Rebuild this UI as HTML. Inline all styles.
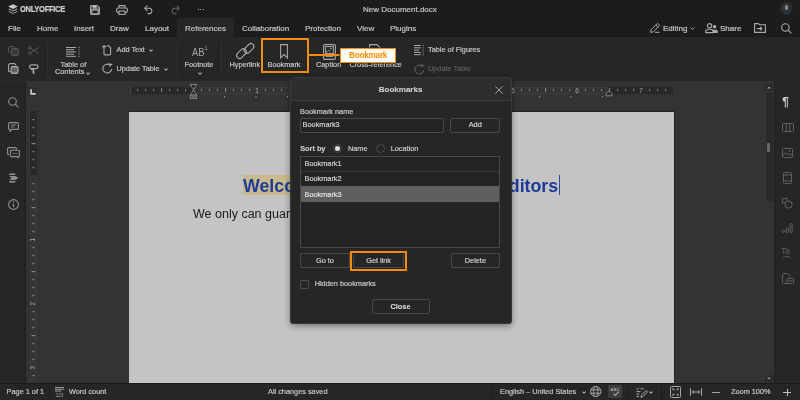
<!DOCTYPE html>
<html><head><meta charset="utf-8">
<style>
*{margin:0;padding:0;box-sizing:border-box}
html,body{width:800px;height:400px;overflow:hidden;background:#1c1c1c;font-family:"Liberation Sans",sans-serif;color:#c4c4c4}
.a{position:absolute}
.t8{position:absolute;font-size:8px;line-height:9px;white-space:nowrap;-webkit-text-stroke:0.2px currentColor}
.t7{position:absolute;font-size:7.33px;line-height:8px;white-space:nowrap;-webkit-text-stroke:0.2px currentColor}
svg{position:absolute;overflow:visible}
</style></head><body><div id="root" style="position:absolute;left:0;top:0;width:800px;height:400px;overflow:hidden;background:#1c1c1c;will-change:transform">
<!-- header -->
<div class="a" style="left:0;top:0;width:800px;height:37px;background:#1c1c1c"></div>
<!-- active tab -->
<div class="a" style="left:177px;top:18px;width:57px;height:20px;background:#262626"></div>
<!-- toolbar -->
<div class="a" style="left:0;top:37px;width:800px;height:44px;background:#262626"></div>
<!-- canvas -->
<div class="a" style="left:26px;top:81px;width:748px;height:302px;background:#333"></div>
<!-- left panel -->
<div class="a" style="left:0;top:80.5px;width:26px;height:302.5px;background:#262626;border-right:1px solid #1e1e1e;border-top:1px solid #2e2e2e"></div>
<!-- right panel -->
<div class="a" style="left:774px;top:81px;width:26px;height:302px;background:#262626;border-left:1px solid #1e1e1e"></div>
<!-- status -->
<div class="a" style="left:0;top:383px;width:800px;height:17px;background:#262626;border-top:1px solid #1a1a1a"></div>


<!-- logo -->
<svg style="left:8px;top:4px" width="10" height="10" viewBox="0 0 10 10">
<path d="M5 0.3 L9.8 2.6 L5 4.9 L0.2 2.6Z" fill="#c8c8c8"/>
<path d="M1.3 4.6 L5 6.4 L8.7 4.6 L9.8 5.2 L5 7.5 L0.2 5.2Z" fill="#a8a8a8"/>
<path d="M1.3 7.1 L5 8.9 L8.7 7.1 L9.8 7.7 L5 10 L0.2 7.7Z" fill="#909090"/>
</svg>
<div class="t8" style="left:20.3px;top:5.1px;font-weight:bold;font-size:8.6px;line-height:9px;letter-spacing:-0.35px;color:#d0d0d0;transform:scaleX(0.88);transform-origin:0 0">ONLYOFFICE</div>
<!-- save -->
<svg style="left:89.5px;top:4.5px" width="10" height="10" viewBox="0 0 10 10">
<path d="M1.2 0.5H7.6L9.5 2.4V8.8A0.7 0.7 0 0 1 8.8 9.5H1.2A0.7 0.7 0 0 1 0.5 8.8V1.2A0.7 0.7 0 0 1 1.2 0.5Z" fill="#8a8a8a" stroke="#a9a9a9" stroke-width="1"/>
<rect x="1.6" y="1.4" width="0.9" height="2.6" fill="#1c1c1c"/><rect x="7.3" y="1.4" width="0.9" height="2.6" fill="#1c1c1c"/>
<rect x="2.6" y="1" width="3.4" height="1.3" fill="#c8c8c8"/>
<rect x="2.6" y="5.8" width="4.8" height="2.2" fill="#1c1c1c"/>
</svg>
<!-- print -->
<svg style="left:115.5px;top:4.5px" width="12" height="10" viewBox="0 0 12 10" fill="none" stroke="#a9a9a9" stroke-width="1.1">
<path d="M3 3V0.6H9V3"/><rect x="0.6" y="3" width="10.8" height="4.6" rx="1.6"/><rect x="3" y="6" width="6" height="3.4" fill="#1c1c1c"/>
</svg>
<!-- undo -->
<svg style="left:143.5px;top:4.5px" width="10" height="9" viewBox="0 0 10 9" fill="none" stroke="#a9a9a9" stroke-width="1.1">
<path d="M3.4 0.6L0.8 3.2L3.4 5.8"/><path d="M0.8 3.2H6.2A3 3 0 0 1 6.2 8.6H3.6"/>
</svg>
<!-- redo -->
<svg style="left:169.5px;top:4.5px" width="10" height="9" viewBox="0 0 10 9" fill="none" stroke="#5e5e5e" stroke-width="1.1">
<path d="M6.6 0.6L9.2 3.2L6.6 5.8"/><path d="M9.2 3.2H3.8A3 3 0 0 0 3.8 8.6H6.4"/>
</svg>
<div class="a" style="left:197.5px;top:8.5px;width:1.3px;height:1.3px;background:#aaa"></div>
<div class="a" style="left:200px;top:8.5px;width:1.3px;height:1.3px;background:#aaa"></div>
<div class="a" style="left:202.5px;top:8.5px;width:1.3px;height:1.3px;background:#aaa"></div>
<!-- title -->
<div class="t8" style="left:363px;top:4.7px;color:#c4c4c4">New Document.docx</div>
<!-- avatar -->
<div class="a" style="left:780px;top:2px;width:13px;height:13px;border-radius:50%;background:radial-gradient(circle at 50% 45%,#3a3a3a 0,#2a2a2a 60%,#1c1c1c 100%)"></div>
<div class="a" style="left:785px;top:5px;width:3px;height:5px;border-radius:2px;background:#888"></div>
<div class="a" style="left:783px;top:11px;width:7px;height:3px;border-radius:3px 3px 0 0;background:#1e3a50"></div>
<!-- tabs -->
<div class="t8" style="left:8px;top:23.6px">File</div>
<div class="t8" style="left:37px;top:23.6px">Home</div>
<div class="t8" style="left:74px;top:23.6px">Insert</div>
<div class="t8" style="left:110px;top:23.6px">Draw</div>
<div class="t8" style="left:145px;top:23.6px">Layout</div>
<div class="t8" style="left:185px;top:23.6px">References</div>
<div class="t8" style="left:242px;top:23.6px">Collaboration</div>
<div class="t8" style="left:305px;top:23.6px">Protection</div>
<div class="t8" style="left:357px;top:23.6px">View</div>
<div class="t8" style="left:390px;top:23.6px">Plugins</div>
<!-- right header -->
<svg style="left:650px;top:23px" width="10" height="10" viewBox="0 0 10 10" fill="none" stroke="#a9a9a9" stroke-width="1">
<path d="M0.7 9.3L1 6.8L6.8 1A1.2 1.2 0 0 1 8.5 1L9 1.5A1.2 1.2 0 0 1 9 3.2L3.2 9Z"/><path d="M5.8 2L8 4.2"/><path d="M5 9.3H9.5"/>
</svg>
<div class="t8" style="left:663px;top:23.6px">Editing</div>
<svg style="left:690px;top:27px" width="5" height="3" viewBox="0 0 5 3" fill="none" stroke="#a9a9a9" stroke-width="0.9"><path d="M0.5 0.5L2.5 2.5L4.5 0.5"/></svg>
<svg style="left:705px;top:22.5px" width="14" height="11" viewBox="0 0 14 11" fill="none" stroke="#a9a9a9" stroke-width="1.1">
<circle cx="4.6" cy="2.7" r="2.1"/><path d="M0.8 9.6V8.4C0.8 7 2 6.2 3.4 6.2H5.8C7.2 6.2 8.4 7 8.4 8.4V9.6Z"/>
<circle cx="9.6" cy="3.8" r="1.8" fill="#a9a9a9" stroke="none"/><path d="M7.4 10.1V7.9C7.4 7.2 8 6.8 8.6 6.8H10.8C11.8 6.8 12.8 7.4 12.8 8.6V10.1Z" fill="#a9a9a9" stroke="none"/>
</svg>
<div class="t8" style="left:720px;top:23.6px">Share</div>
<svg style="left:754px;top:23px" width="12" height="10" viewBox="0 0 12 10" fill="none" stroke="#a9a9a9" stroke-width="1.1">
<path d="M0.6 9.4V0.6H4.4L5.6 1.8H11.4V9.4Z"/><path d="M3.2 5.6H8M6.2 3.8L8 5.6L6.2 7.4"/>
</svg>
<svg style="left:781px;top:22.5px" width="11" height="11" viewBox="0 0 11 11" fill="none" stroke="#a9a9a9" stroke-width="1.1">
<circle cx="4.4" cy="4.4" r="3.7"/><path d="M7 7L10.4 10.4"/>
</svg>


<!-- ===== toolbar ===== -->
<!-- copy (disabled) -->
<svg style="left:8px;top:46px" width="11" height="10" viewBox="0 0 11 10" fill="none" stroke="#5a5a5a" stroke-width="1">
<path d="M2.5 6.5H1.8A1.2 1.2 0 0 1 0.6 5.3V1.8A1.2 1.2 0 0 1 1.8 0.6H5.3A1.2 1.2 0 0 1 6.5 1.8V2.5"/>
<rect x="3.5" y="2.6" width="6.8" height="6.8" rx="1.4" fill="#3e3e3e"/><path d="M5.5 4.4V7.6M8.3 4.4V7.6" stroke="#2e2e2e" stroke-width="0.7"/>
</svg>
<!-- cut (disabled) -->
<svg style="left:28px;top:46px" width="11" height="9" viewBox="0 0 11 9" fill="none" stroke="#5a5a5a" stroke-width="1">
<circle cx="1.8" cy="1.8" r="1.3"/><circle cx="1.8" cy="7.2" r="1.3"/><path d="M3 2.5L10.6 7.6M3 6.5L10.6 1.4"/>
</svg>
<!-- paste -->
<svg style="left:8px;top:63px" width="11" height="11" viewBox="0 0 11 11" fill="none" stroke="#a6a6a6" stroke-width="1.1">
<path d="M2.6 8.6H1.8A1.2 1.2 0 0 1 0.6 7.4V2.4A1.8 1.8 0 0 1 2.4 0.6H6A1.8 1.8 0 0 1 7.8 2.4"/>
<rect x="3.2" y="3.6" width="6.8" height="6.8" rx="1.4" fill="#6e6e6e" stroke-width="1.2"/><path d="M5.2 5.4V8.6M8 5.4V8.6" stroke="#3a3a3a" stroke-width="0.7"/>
</svg>
<!-- format painter -->
<svg style="left:29px;top:63.5px" width="10" height="10" viewBox="0 0 10 10" fill="none" stroke="#a6a6a6" stroke-width="1.1">
<rect x="0.6" y="0.8" width="8.4" height="3.8" rx="1.9" stroke-width="1.2"/><path d="M2.6 4.2V5.6H4.5V6.6" stroke-width="1.1"/><path d="M4.5 6.4V9.8" stroke-width="1.9"/>
</svg>
<div class="a" style="left:47px;top:42px;width:1px;height:35px;background:#303030"></div>
<!-- TOC -->
<svg style="left:66px;top:47px" width="15" height="10" viewBox="0 0 15 10" fill="#a6a6a6">
<rect x="0" y="0" width="10" height="1"/><rect x="0" y="2.2" width="8" height="1"/><rect x="0" y="4.4" width="10" height="1"/><rect x="0" y="6.6" width="8" height="1"/><rect x="0" y="8.8" width="10" height="1"/>
<rect x="12.5" y="0" width="1" height="1"/><rect x="12.5" y="2.2" width="1" height="1"/><rect x="12.5" y="4.4" width="1" height="1"/><rect x="12.5" y="6.6" width="1" height="1"/><rect x="12.5" y="8.8" width="1" height="1"/>
</svg>
<div class="t7" style="left:60.5px;top:60.9px">Table of</div>
<div class="t7" style="left:55px;top:68.4px">Contents</div>
<svg style="left:86px;top:71.5px" width="4" height="3" viewBox="0 0 4 3" fill="none" stroke="#a6a6a6" stroke-width="1.05"><path d="M0.4 0.6L2 2.2L3.6 0.6"/></svg>
<!-- Add text -->
<svg style="left:102px;top:45px" width="10" height="11" viewBox="0 0 10 11" fill="none" stroke="#a6a6a6" stroke-width="1.1">
<path d="M4.6 0.9H6.8L8.6 2.7V9A0.9 0.9 0 0 1 7.7 9.9H2.9A0.9 0.9 0 0 1 2 9V3.6"/><path d="M0.2 1.6H4M2 0V3.4" stroke-width="1.1"/>
</svg>
<div class="t7" style="left:116.5px;top:46.4px">Add Text</div>
<svg style="left:149px;top:49px" width="4" height="3" viewBox="0 0 4 3" fill="none" stroke="#a6a6a6" stroke-width="1.05"><path d="M0.4 0.6L2 2.2L3.6 0.6"/></svg>
<!-- update table -->
<svg style="left:102px;top:63px;color:#a6a6a6" width="11" height="11" viewBox="0 0 11 11" fill="none" stroke="#a6a6a6" stroke-width="1.1">
<path d="M7.2 1.6A4.4 4.4 0 1 0 9.6 6.2"/><path d="M6.6 -0.1L10.6 1.2L7.6 4Z" stroke="none" fill="currentColor"/>
</svg>
<div class="t7" style="left:116.5px;top:65.2px">Update Table</div>
<svg style="left:164px;top:68px" width="4" height="3" viewBox="0 0 4 3" fill="none" stroke="#a6a6a6" stroke-width="1.05"><path d="M0.4 0.6L2 2.2L3.6 0.6"/></svg>
<div class="a" style="left:177px;top:42px;width:1px;height:35px;background:#303030"></div>
<!-- footnote -->
<div class="a" style="left:191.5px;top:45.9px;font-size:11px;line-height:12px;color:#a6a6a6;transform:scaleX(0.84);transform-origin:0 0;white-space:nowrap">AB</div>
<div class="a" style="left:204.6px;top:45.6px;font-size:5.5px;line-height:5px;color:#a6a6a6">1</div>
<div class="t7" style="left:184.5px;top:60.9px">Footnote</div>
<svg style="left:198px;top:72px" width="4" height="3" viewBox="0 0 4 3" fill="none" stroke="#a6a6a6" stroke-width="1.05"><path d="M0.4 0.6L2 2.2L3.6 0.6"/></svg>
<div class="a" style="left:221px;top:42px;width:1px;height:35px;background:#303030"></div>
<!-- hyperlink -->
<svg style="left:237px;top:43px" width="16" height="16" viewBox="0 0 16 16" fill="none" stroke="#a6a6a6" stroke-width="1.15">
<rect x="6.4" y="2.5" width="11.2" height="5.8" rx="2.9" transform="rotate(-45 12 5.4)"/>
<rect x="-1.1" y="7.7" width="11.2" height="5.8" rx="2.9" transform="rotate(-45 4.5 10.6)"/>
</svg>
<div class="t7" style="left:229.5px;top:60.9px">Hyperlink</div>
<!-- bookmark -->
<svg style="left:279.5px;top:44px" width="8" height="15" viewBox="0 0 8 15" fill="none" stroke="#a6a6a6" stroke-width="1.1">
<path d="M0.6 0.6H7.4V14L4 10.6L0.6 14Z"/>
</svg>
<div class="t7" style="left:267.5px;top:60.9px">Bookmark</div>
<!-- caption -->
<svg style="left:322.5px;top:43.5px" width="13" height="16" viewBox="0 0 13 16" fill="none" stroke="#a6a6a6" stroke-width="1.1">
<rect x="0.6" y="0.6" width="11.8" height="14.8" rx="1.2"/><rect x="2.6" y="2.6" width="7.8" height="7" stroke-width="1"/>
<path d="M3 8.6L5.6 6.2L7.4 7.8" stroke-width="0.9"/><circle cx="8" cy="4.6" r="0.8" fill="#a6a6a6" stroke="none"/><path d="M2.6 12.4H10.4" stroke-width="1"/>
</svg>
<div class="t7" style="left:316px;top:60.9px">Caption</div>
<!-- cross ref -->
<svg style="left:369px;top:44px" width="12" height="14" viewBox="0 0 12 14" fill="none" stroke="#a6a6a6" stroke-width="1.1">
<path d="M0.6 0.6H8L11.4 4V13.4H0.6Z"/>
</svg>
<div class="t7" style="left:349.4px;top:60.9px">Cross-reference</div>
<!-- table of figures -->
<svg style="left:413.5px;top:44.5px" width="11" height="11" viewBox="0 0 11 11" fill="#a6a6a6">
<rect x="0" y="0" width="6.5" height="1"/><rect x="0" y="2.3" width="7" height="1"/><rect x="0" y="4.6" width="5" height="1"/><rect x="0" y="6.9" width="7" height="1"/><rect x="0" y="9.2" width="6.5" height="1"/>
<rect x="8.6" y="0" width="1" height="1"/><rect x="8.6" y="2.3" width="1" height="1"/><rect x="8.6" y="4.6" width="1" height="1"/><rect x="8.6" y="6.9" width="1" height="1"/><rect x="8.6" y="9.2" width="1" height="1"/>
</svg>
<div class="t7" style="left:428px;top:46.4px">Table of Figures</div>
<svg style="left:413.5px;top:63.5px;color:#5a5a5a" width="11" height="11" viewBox="0 0 11 11" fill="none" stroke="#5a5a5a" stroke-width="1.1">
<path d="M7.2 1.6A4.4 4.4 0 1 0 9.6 6.2"/><path d="M6.6 -0.1L10.6 1.2L7.6 4Z" stroke="none" fill="currentColor"/>
</svg>
<div class="t7" style="left:428px;top:65.2px;color:#5c5c5c">Update Table</div>

<!-- annotation: bookmark frame -->
<div class="a" style="left:261px;top:38px;width:47.5px;height:34.5px;border:2px solid #ff8a00;box-shadow:inset 0 0 0 1px #162630,0 0 0 1px #162630"></div>
<div class="a" style="left:308px;top:54px;width:33px;height:2px;background:#ff8a00"></div>
<div class="a" style="left:340px;top:48px;width:56px;height:15px;background:#fff;border:1.5px solid #ff8a00;box-shadow:0 0 0 0.5px #162630"></div>
<div class="a" style="left:349px;top:51.1px;font-size:8.3px;line-height:9px;font-weight:bold;letter-spacing:-0.3px;color:#ff8a00;white-space:nowrap">Bookmark</div>


<!-- ===== rulers ===== -->
<div class="a" style="left:28px;top:87px;width:9px;height:9px;background:#2e2e2e;border-radius:1px"></div>
<svg style="left:30px;top:88.5px" width="6" height="6" viewBox="0 0 6 6" fill="#d0d0d0"><path d="M0.3 0.3H1.9V4.1H5.7V5.7H0.3Z"/></svg>
<!-- vertical ruler -->
<div class="a" style="left:30px;top:111px;width:7px;height:64px;background:#282828"></div>
<div class="a" style="left:29.5px;top:175px;width:7px;height:208px;background:#343434;border-left:1px solid #383838;border-right:1px solid #383838"></div>
<!-- horizontal ruler -->
<div class="a" style="left:130px;top:87px;width:63px;height:7px;background:#282828;border-left:1px solid #4a4a4a"></div>
<div class="a" style="left:193px;top:86.5px;width:416px;height:7.5px;background:#343434;border-top:1px solid #3a3a3a;border-bottom:1px solid #3a3a3a"></div>
<div class="a" style="left:609px;top:87px;width:64px;height:7px;background:#282828"></div>
<svg style="left:0;top:0" width="800" height="400"><rect x="137.2" y="88.9" width="0.9" height="2.2" fill="#8e8e8e"/><rect x="145.2" y="88.9" width="0.9" height="2.2" fill="#8e8e8e"/><rect x="153.2" y="88.9" width="0.9" height="2.2" fill="#8e8e8e"/><rect x="161.2" y="88.2" width="0.9" height="3.6" fill="#9a9a9a"/><rect x="169.2" y="88.9" width="0.9" height="2.2" fill="#8e8e8e"/><rect x="177.2" y="88.9" width="0.9" height="2.2" fill="#8e8e8e"/><rect x="185.2" y="88.9" width="0.9" height="2.2" fill="#8e8e8e"/><rect x="201.2" y="88.9" width="0.9" height="2.2" fill="#8e8e8e"/><rect x="209.2" y="88.9" width="0.9" height="2.2" fill="#8e8e8e"/><rect x="217.2" y="88.9" width="0.9" height="2.2" fill="#8e8e8e"/><rect x="225.2" y="88.2" width="0.9" height="3.6" fill="#9a9a9a"/><rect x="233.2" y="88.9" width="0.9" height="2.2" fill="#8e8e8e"/><rect x="241.2" y="88.9" width="0.9" height="2.2" fill="#8e8e8e"/><rect x="249.2" y="88.9" width="0.9" height="2.2" fill="#8e8e8e"/><text x="257" y="92.6" font-size="6.4" text-anchor="middle" fill="#a8a8a8" font-family="Liberation Sans">1</text><rect x="265.2" y="88.9" width="0.9" height="2.2" fill="#8e8e8e"/><rect x="273.2" y="88.9" width="0.9" height="2.2" fill="#8e8e8e"/><rect x="281.2" y="88.9" width="0.9" height="2.2" fill="#8e8e8e"/><rect x="297.2" y="88.9" width="0.9" height="2.2" fill="#8e8e8e"/><rect x="305.2" y="88.9" width="0.9" height="2.2" fill="#8e8e8e"/><rect x="313.2" y="88.9" width="0.9" height="2.2" fill="#8e8e8e"/><text x="321" y="92.6" font-size="6.4" text-anchor="middle" fill="#a8a8a8" font-family="Liberation Sans">2</text><rect x="329.2" y="88.9" width="0.9" height="2.2" fill="#8e8e8e"/><rect x="337.2" y="88.9" width="0.9" height="2.2" fill="#8e8e8e"/><rect x="345.2" y="88.9" width="0.9" height="2.2" fill="#8e8e8e"/><rect x="353.2" y="88.2" width="0.9" height="3.6" fill="#9a9a9a"/><rect x="361.2" y="88.9" width="0.9" height="2.2" fill="#8e8e8e"/><rect x="369.2" y="88.9" width="0.9" height="2.2" fill="#8e8e8e"/><rect x="377.2" y="88.9" width="0.9" height="2.2" fill="#8e8e8e"/><text x="385" y="92.6" font-size="6.4" text-anchor="middle" fill="#a8a8a8" font-family="Liberation Sans">3</text><rect x="393.2" y="88.9" width="0.9" height="2.2" fill="#8e8e8e"/><rect x="401.2" y="88.9" width="0.9" height="2.2" fill="#8e8e8e"/><rect x="409.2" y="88.9" width="0.9" height="2.2" fill="#8e8e8e"/><rect x="417.2" y="88.2" width="0.9" height="3.6" fill="#9a9a9a"/><rect x="425.2" y="88.9" width="0.9" height="2.2" fill="#8e8e8e"/><rect x="433.2" y="88.9" width="0.9" height="2.2" fill="#8e8e8e"/><rect x="441.2" y="88.9" width="0.9" height="2.2" fill="#8e8e8e"/><text x="449" y="92.6" font-size="6.4" text-anchor="middle" fill="#a8a8a8" font-family="Liberation Sans">4</text><rect x="457.2" y="88.9" width="0.9" height="2.2" fill="#8e8e8e"/><rect x="465.2" y="88.9" width="0.9" height="2.2" fill="#8e8e8e"/><rect x="473.2" y="88.9" width="0.9" height="2.2" fill="#8e8e8e"/><rect x="481.2" y="88.2" width="0.9" height="3.6" fill="#9a9a9a"/><rect x="489.2" y="88.9" width="0.9" height="2.2" fill="#8e8e8e"/><rect x="497.2" y="88.9" width="0.9" height="2.2" fill="#8e8e8e"/><rect x="505.2" y="88.9" width="0.9" height="2.2" fill="#8e8e8e"/><text x="513" y="92.6" font-size="6.4" text-anchor="middle" fill="#a8a8a8" font-family="Liberation Sans">5</text><rect x="521.2" y="88.9" width="0.9" height="2.2" fill="#8e8e8e"/><rect x="529.2" y="88.9" width="0.9" height="2.2" fill="#8e8e8e"/><rect x="537.2" y="88.9" width="0.9" height="2.2" fill="#8e8e8e"/><rect x="545.2" y="88.2" width="0.9" height="3.6" fill="#9a9a9a"/><rect x="553.2" y="88.9" width="0.9" height="2.2" fill="#8e8e8e"/><rect x="561.2" y="88.9" width="0.9" height="2.2" fill="#8e8e8e"/><rect x="569.2" y="88.9" width="0.9" height="2.2" fill="#8e8e8e"/><text x="577" y="92.6" font-size="6.4" text-anchor="middle" fill="#a8a8a8" font-family="Liberation Sans">6</text><rect x="585.2" y="88.9" width="0.9" height="2.2" fill="#8e8e8e"/><rect x="593.2" y="88.9" width="0.9" height="2.2" fill="#8e8e8e"/><rect x="601.2" y="88.9" width="0.9" height="2.2" fill="#8e8e8e"/><rect x="609.2" y="88.2" width="0.9" height="3.6" fill="#9a9a9a"/><rect x="617.2" y="88.9" width="0.9" height="2.2" fill="#8e8e8e"/><rect x="625.2" y="88.9" width="0.9" height="2.2" fill="#8e8e8e"/><rect x="633.2" y="88.9" width="0.9" height="2.2" fill="#8e8e8e"/><text x="641" y="92.6" font-size="6.4" text-anchor="middle" fill="#a8a8a8" font-family="Liberation Sans">7</text><rect x="649.2" y="88.9" width="0.9" height="2.2" fill="#8e8e8e"/><rect x="657.2" y="88.9" width="0.9" height="2.2" fill="#8e8e8e"/><rect x="665.2" y="88.9" width="0.9" height="2.2" fill="#8e8e8e"/><rect x="32.5" y="119.2" width="2" height="1" fill="#9a9a9a"/><rect x="32.5" y="127.2" width="2" height="1" fill="#9a9a9a"/><rect x="32.5" y="135.2" width="2" height="1" fill="#9a9a9a"/><rect x="31.5" y="143.2" width="4" height="1" fill="#9a9a9a"/><rect x="32.5" y="151.2" width="2" height="1" fill="#9a9a9a"/><rect x="32.5" y="159.2" width="2" height="1" fill="#9a9a9a"/><rect x="32.5" y="167.2" width="2" height="1" fill="#9a9a9a"/><rect x="32.5" y="183.2" width="2" height="1" fill="#9a9a9a"/><rect x="32.5" y="191.2" width="2" height="1" fill="#9a9a9a"/><rect x="32.5" y="199.2" width="2" height="1" fill="#9a9a9a"/><rect x="31.5" y="207.2" width="4" height="1" fill="#9a9a9a"/><rect x="32.5" y="215.2" width="2" height="1" fill="#9a9a9a"/><rect x="32.5" y="223.2" width="2" height="1" fill="#9a9a9a"/><rect x="32.5" y="231.2" width="2" height="1" fill="#9a9a9a"/><text x="0" y="0" font-size="6.4" text-anchor="middle" fill="#a8a8a8" font-family="Liberation Sans" transform="translate(35.2 239.7) rotate(-90)">1</text><rect x="32.5" y="247.2" width="2" height="1" fill="#9a9a9a"/><rect x="32.5" y="255.2" width="2" height="1" fill="#9a9a9a"/><rect x="32.5" y="263.2" width="2" height="1" fill="#9a9a9a"/><rect x="31.5" y="271.2" width="4" height="1" fill="#9a9a9a"/><rect x="32.5" y="279.2" width="2" height="1" fill="#9a9a9a"/><rect x="32.5" y="287.2" width="2" height="1" fill="#9a9a9a"/><rect x="32.5" y="295.2" width="2" height="1" fill="#9a9a9a"/><text x="0" y="0" font-size="6.4" text-anchor="middle" fill="#a8a8a8" font-family="Liberation Sans" transform="translate(35.2 303.7) rotate(-90)">2</text><rect x="32.5" y="311.2" width="2" height="1" fill="#9a9a9a"/><rect x="32.5" y="319.2" width="2" height="1" fill="#9a9a9a"/><rect x="32.5" y="327.2" width="2" height="1" fill="#9a9a9a"/><rect x="31.5" y="335.2" width="4" height="1" fill="#9a9a9a"/><rect x="32.5" y="343.2" width="2" height="1" fill="#9a9a9a"/><rect x="32.5" y="351.2" width="2" height="1" fill="#9a9a9a"/><rect x="32.5" y="359.2" width="2" height="1" fill="#9a9a9a"/><text x="0" y="0" font-size="6.4" text-anchor="middle" fill="#a8a8a8" font-family="Liberation Sans" transform="translate(35.2 367.7) rotate(-90)">3</text><rect x="32.5" y="375.2" width="2" height="1" fill="#9a9a9a"/>
<rect x="224.0" y="96" width="1" height="1.5" fill="#8a8a8a"/><rect x="255.5" y="96" width="1" height="1.5" fill="#8a8a8a"/><rect x="287.0" y="96" width="1" height="1.5" fill="#8a8a8a"/><rect x="318.5" y="96" width="1" height="1.5" fill="#8a8a8a"/><rect x="350.0" y="96" width="1" height="1.5" fill="#8a8a8a"/><rect x="381.5" y="96" width="1" height="1.5" fill="#8a8a8a"/><rect x="413.0" y="96" width="1" height="1.5" fill="#8a8a8a"/><rect x="444.5" y="96" width="1" height="1.5" fill="#8a8a8a"/><rect x="476.0" y="96" width="1" height="1.5" fill="#8a8a8a"/><rect x="507.5" y="96" width="1" height="1.5" fill="#8a8a8a"/><rect x="539.0" y="96" width="1" height="1.5" fill="#8a8a8a"/><rect x="570.5" y="96" width="1" height="1.5" fill="#8a8a8a"/><rect x="602.0" y="96" width="1" height="1.5" fill="#8a8a8a"/>
<path d="M190.3 84.5H196.7L193.5 89.8Z M190.3 95.2H196.7L193.5 89.9Z" fill="#2a2a2a" stroke="#8c8c8c" stroke-width="0.9"/>
<rect x="190.3" y="95.2" width="6.4" height="3.4" fill="#2a2a2a" stroke="#8c8c8c" stroke-width="0.9"/>
<rect x="191.5" y="96.4" width="4" height="1" fill="#9a9a9a"/>
<path d="M605.8 95.8H612.2V94L609 90.8L605.8 94Z" fill="#2a2a2a" stroke="#8c8c8c" stroke-width="0.9"/>
</svg>


<!-- ===== left panel icons ===== -->
<svg style="left:8px;top:97px" width="11" height="11" viewBox="0 0 11 11" fill="none" stroke="#8e8e8e" stroke-width="1.1">
<circle cx="4.5" cy="4.5" r="3.8"/><path d="M7.2 7.2L10.4 10.4"/>
</svg>
<svg style="left:8px;top:122px" width="11" height="10" viewBox="0 0 11 10" fill="none" stroke="#8e8e8e" stroke-width="1.1">
<path d="M1.6 0.6H9.4A1 1 0 0 1 10.4 1.6V6.4A1 1 0 0 1 9.4 7.4H4L2 9.4V7.4H1.6A1 1 0 0 1 0.6 6.4V1.6A1 1 0 0 1 1.6 0.6Z"/><path d="M2.8 3H8.2M2.8 5H6.6" stroke-width="0.9"/>
</svg>
<svg style="left:6.5px;top:147px" width="13" height="11" viewBox="0 0 13 11" fill="none" stroke="#8e8e8e" stroke-width="1.1">
<path d="M2 7.6H1.6A1 1 0 0 1 0.6 6.6V1.6A1 1 0 0 1 1.6 0.6H8.4A1 1 0 0 1 9.4 1.6V2.6"/>
<path d="M4.4 3.2H11.4A1 1 0 0 1 12.4 4.2V8.6A1 1 0 0 1 11.4 9.6H11V10.6L9.8 9.6H4.4A1 1 0 0 1 3.4 8.6V4.2A1 1 0 0 1 4.4 3.2Z"/><path d="M5.6 6.4H6.6M7.4 6.4H8.4M9.2 6.4H10.2" stroke-width="1"/>
</svg>
<svg style="left:8.5px;top:173px" width="10" height="10" viewBox="0 0 10 10" fill="#8e8e8e">
<rect x="0.3" y="0.4" width="6" height="1.6"/><path d="M0.3 3H6.4L9.4 5L6.4 7H0.3L2.6 5Z"/><rect x="0.3" y="8" width="6" height="1.6"/>
</svg>
<svg style="left:8px;top:199px" width="11" height="11" viewBox="0 0 11 11" fill="none" stroke="#8e8e8e" stroke-width="1.1">
<circle cx="5.5" cy="5.5" r="4.9"/><path d="M5.5 4.6V8.2" stroke-width="1.2"/><circle cx="5.5" cy="3" r="0.7" fill="#8e8e8e" stroke="none"/>
</svg>
<!-- ===== right panel icons ===== -->
<div class="a" style="left:782.3px;top:96.3px;font-size:12px;line-height:12px;font-weight:bold;color:#d0d0d0">&#182;</div>
<svg style="left:781.5px;top:123px" width="12" height="9" viewBox="0 0 12 9" fill="none" stroke="#606060" stroke-width="1">
<rect x="0.5" y="0.5" width="11" height="8" rx="1"/><path d="M4.2 0.5V8.5M7.8 0.5V8.5"/>
</svg>
<svg style="left:782px;top:148px" width="11" height="10" viewBox="0 0 11 10" fill="none" stroke="#606060" stroke-width="1">
<rect x="0.5" y="0.5" width="10" height="9" rx="1"/><path d="M0.8 7.4L3.6 4.8L6 6.8L7.6 5.6L10.2 7.6"/><circle cx="7.6" cy="3" r="0.9" fill="#606060" stroke="none"/>
</svg>
<svg style="left:783px;top:172px" width="9" height="12" viewBox="0 0 9 12" fill="none" stroke="#606060" stroke-width="1">
<rect x="0.5" y="0.5" width="8" height="11" rx="1"/><path d="M0.5 3H8.5M0.5 9H8.5"/>
</svg>
<svg style="left:782px;top:197.5px" width="11" height="11" viewBox="0 0 11 11" fill="none" stroke="#606060" stroke-width="1">
<path d="M5 3.2V0.5H0.5V5H3.2"/><circle cx="6.6" cy="6.6" r="3.6"/>
</svg>
<svg style="left:782px;top:222.5px" width="11" height="10" viewBox="0 0 11 10" fill="none" stroke="#606060" stroke-width="1">
<rect x="0.5" y="7" width="2" height="2.5" rx="0.8"/><rect x="4.3" y="4.5" width="2" height="5" rx="0.8"/><rect x="8.1" y="0.5" width="2" height="9" rx="0.8"/>
</svg>
<div class="a" style="left:781px;top:247px;font-size:9px;line-height:9px;color:#606060;letter-spacing:-0.5px">Ta</div>
<svg style="left:781.5px;top:255px" width="10" height="4" viewBox="0 0 10 4" fill="none" stroke="#606060" stroke-width="0.9"><path d="M0.8 3.4Q5 -0.8 9.2 3.4"/></svg>
<svg style="left:781.5px;top:272.5px" width="12" height="11" viewBox="0 0 12 11" fill="none" stroke="#606060" stroke-width="1">
<path d="M6.4 10.5H1.5A1 1 0 0 1 0.5 9.5V1.5A1 1 0 0 1 1.5 0.5H5.5L8 3V4.5"/><rect x="4.8" y="5.5" width="6.7" height="5" rx="0.8"/><path d="M6 8H10.4"/>
</svg>
<!-- scrollbar -->
<div class="a" style="left:765px;top:84px;width:8px;height:7px;background:#2a2a2a"></div>
<svg style="left:765px;top:84px" width="8" height="7" viewBox="0 0 8 7"><path d="M2 4.4L4 2.4L6 4.4Z" fill="#9a9a9a"/></svg>
<div class="a" style="left:765.5px;top:93px;width:7px;height:108px;background:#292929"></div>
<div class="a" style="left:766.6px;top:143px;width:3.6px;height:9.4px;background:#686868;border-radius:1px"></div>
<div class="a" style="left:765px;top:375px;width:8px;height:7px;background:#2a2a2a"></div>
<svg style="left:765px;top:375px" width="8" height="7" viewBox="0 0 8 7"><path d="M2 2.6L4 4.6L6 2.6Z" fill="#9a9a9a"/></svg>

<!-- page -->
<div class="a" style="left:129px;top:110.5px;width:545.5px;height:272.5px;background:#c4c4c4;border-top:1px solid #232323;border-right:1px solid #232323"></div>


<!-- page content -->
<div class="a" style="left:243px;top:175px;width:60px;height:20px;background:#c8b98f"></div>
<div class="a" style="left:243px;top:175.8px;font-size:17.8px;line-height:20px;font-weight:bold;color:#1d3d98;white-space:nowrap">Welcome to the ONLYOFFICE Editors</div>
<div class="a" style="left:559px;top:175px;width:1px;height:20px;background:#2a4aa0"></div>
<div class="a" style="left:193px;top:207.4px;font-size:12.5px;line-height:15px;color:#1a1a1a;white-space:nowrap">We only can guarantee the best quality</div>

<!-- dialog -->
<div class="a" style="left:290px;top:77px;width:222px;height:247px;background:#262626;border:1px solid #3a3a3a;border-radius:3px;box-shadow:0 2px 6px rgba(0,0,0,.4)"></div>
<div class="a" style="left:291px;top:78px;width:220px;height:23px;background:#2d2d2d;border-bottom:1px solid #3c3c3c;border-radius:2px 2px 0 0"></div>
<div class="t8" style="left:378.8px;top:85.2px;font-weight:bold;color:#d0d0d0;-webkit-text-stroke:0.1px currentColor">Bookmarks</div>
<svg style="left:495px;top:85.8px" width="8" height="8" viewBox="0 0 8 8" fill="none" stroke="#a8a8a8" stroke-width="0.9"><path d="M0.3 0.3L7.7 7.7M7.7 0.3L0.3 7.7"/></svg>
<div class="t7" style="left:300px;top:107.5px;color:#c8c8c8">Bookmark name</div>
<div class="a" style="left:300px;top:118px;width:143.5px;height:14.5px;border:1px solid #484848;border-radius:2px;background:#242424"></div>
<div class="t7" style="left:302.6px;top:121.3px;color:#d0d0d0">Bookmark3</div>
<div class="a" style="left:450px;top:118px;width:50px;height:14.5px;border:1px solid #484848;border-radius:2px;background:#262626"></div>
<div class="t7" style="left:468.7px;top:121.3px;color:#d0d0d0">Add</div>
<div class="t7" style="left:300.2px;top:144.5px;font-weight:bold;color:#d0d0d0;-webkit-text-stroke:0.1px currentColor">Sort by</div>
<div class="a" style="left:333px;top:144.2px;width:9.2px;height:9.2px;border:1px solid #4a4a4a;border-radius:50%"></div>
<div class="a" style="left:335.1px;top:146.3px;width:5px;height:5px;background:#e0e0e0;border-radius:50%"></div>
<div class="t7" style="left:348px;top:145px;color:#c8c8c8">Name</div>
<div class="a" style="left:375.5px;top:144.2px;width:9.2px;height:9.2px;border:1px solid #4a4a4a;border-radius:50%"></div>
<div class="t7" style="left:390.7px;top:145px;color:#c8c8c8">Location</div>
<!-- list -->
<div class="a" style="left:300px;top:155.5px;width:200px;height:92px;border:1px solid #484848;background:#242424"></div>
<div class="a" style="left:301px;top:170.5px;width:198px;height:1px;background:#3c3c3c"></div>
<div class="a" style="left:301px;top:186px;width:198px;height:16px;background:#5f5f5f"></div>
<div class="t7" style="left:304.5px;top:159.9px;color:#d0d0d0">Bookmark1</div>
<div class="t7" style="left:304.5px;top:175.2px;color:#d0d0d0">Bookmark2</div>
<div class="t7" style="left:304.5px;top:190.7px;color:#e0e0e0">Bookmark3</div>
<!-- buttons -->
<div class="a" style="left:300.2px;top:253px;width:50px;height:14.5px;border:1px solid #484848;border-radius:1px;background:#262626"></div>
<div class="t7" style="left:316px;top:257px;color:#d0d0d0">Go to</div>
<div class="a" style="left:352.5px;top:253px;width:51px;height:14.5px;border:1px solid #484848;border-radius:1px;background:#262626"></div>
<div class="t7" style="left:366.2px;top:257px;color:#d0d0d0">Get link</div>
<div class="a" style="left:450.5px;top:253px;width:49.5px;height:14.5px;border:1px solid #484848;border-radius:1px;background:#262626"></div>
<div class="t7" style="left:464.8px;top:257px;color:#d0d0d0">Delete</div>
<div class="a" style="left:350px;top:250.7px;width:57px;height:20.3px;border:2px solid #ff8a00;box-shadow:inset 0 0 0 1px #162630"></div>
<div class="a" style="left:300.3px;top:279.5px;width:9.2px;height:9px;border:1px solid #4a4a4a;border-radius:1px"></div>
<div class="t7" style="left:314.7px;top:279.9px;color:#c8c8c8">Hidden bookmarks</div>
<div class="a" style="left:372px;top:299px;width:57.5px;height:15px;border:1px solid #484848;border-radius:2px;background:#262626"></div>
<div class="t7" style="left:390.5px;top:303.1px;font-weight:bold;color:#d8d8d8;-webkit-text-stroke:0.1px currentColor">Close</div>

<!-- ===== status bar ===== -->
<div class="t7" style="left:6.6px;top:388.1px">Page 1 of 1</div>
<div class="a" style="left:48.5px;top:385px;width:1px;height:15px;background:#1e1e1e"></div>
<svg style="left:55px;top:386.5px" width="9" height="10" viewBox="0 0 9 10" fill="#a6a6a6">
<rect x="0" y="0" width="9" height="0.9"/><rect x="0" y="1.8" width="9" height="0.9"/><rect x="0" y="3.6" width="6" height="0.9"/>
<text x="4.5" y="9.8" font-size="4.6" text-anchor="middle" font-family="Liberation Sans" letter-spacing="-0.1">123</text>
</svg>
<div class="t7" style="left:69px;top:388.1px">Word count</div>
<div class="t7" style="left:268px;top:388.1px">All changes saved</div>
<div class="a" style="left:491.5px;top:385px;width:1px;height:15px;background:#1e1e1e"></div>
<div class="t7" style="left:500px;top:388.1px">English – United States</div>
<svg style="left:581.5px;top:391px" width="4" height="3" viewBox="0 0 4 3" fill="none" stroke="#a6a6a6" stroke-width="1.05"><path d="M0.4 0.6L2 2.2L3.6 0.6"/></svg>
<svg style="left:589.5px;top:385.5px" width="11.5" height="11" viewBox="0 0 11.5 11" fill="none" stroke="#a6a6a6" stroke-width="1">
<ellipse cx="5.75" cy="5.5" rx="5.2" ry="5"/><ellipse cx="5.75" cy="5.5" rx="2.2" ry="5"/><path d="M0.6 3.8H10.9M0.6 7.2H10.9"/>
</svg>
<div class="a" style="left:608.2px;top:385.2px;width:13.5px;height:12.8px;background:#3c3c3c;border-radius:1px"></div>
<svg style="left:609px;top:386px" width="12" height="11" viewBox="0 0 12 11">
<text x="6" y="4.8" font-size="4.4" font-weight="bold" text-anchor="middle" font-family="Liberation Sans" fill="#a6a6a6">ABC</text>
<path d="M4.4 7.6L6.2 9.4L10 5.6" fill="none" stroke="#a6a6a6" stroke-width="1.2"/>
</svg>
<div class="a" style="left:628px;top:385px;width:1px;height:15px;background:#1e1e1e"></div>
<svg style="left:635.5px;top:386.5px" width="12" height="11" viewBox="0 0 12 11" fill="none" stroke="#a6a6a6" stroke-width="1">
<path d="M0.5 1.6L1.4 2.5L3 0.9"/><path d="M4.4 1.8H7.6M0.5 4.6H4.6M0.5 7H3.4M0.5 9.4H3"/><path d="M5 10.4L5.4 8.2L9.6 4A1 1 0 0 1 11 5.4L6.8 9.6Z"/>
</svg>
<svg style="left:648.5px;top:390.5px" width="4" height="3" viewBox="0 0 4 3" fill="none" stroke="#a6a6a6" stroke-width="1.05"><path d="M0.4 0.6L2 2.2L3.6 0.6"/></svg>
<div class="a" style="left:661px;top:385px;width:1px;height:15px;background:#1e1e1e"></div>
<svg style="left:669.5px;top:385.5px" width="11" height="12" viewBox="0 0 11 12" fill="none" stroke="#a6a6a6" stroke-width="1">
<rect x="0.5" y="0.5" width="10" height="11" rx="1"/><path d="M2.4 2.4L4.2 4.2M8.6 2.4L6.8 4.2M2.4 9.6L4.2 7.8M8.6 9.6L6.8 7.8" stroke-width="1.3"/>
</svg>
<svg style="left:689.5px;top:387.5px" width="12" height="8" viewBox="0 0 12 8" fill="none" stroke="#a6a6a6" stroke-width="1">
<path d="M0.5 0.2V7.8M11.5 0.2V7.8M2.2 4H9.8M4 2.4L2.2 4L4 5.6M8 2.4L9.8 4L8 5.6"/>
</svg>
<div class="a" style="left:712px;top:391.6px;width:7.6px;height:1px;background:#a6a6a6"></div>
<div class="t7" style="left:731px;top:388.1px">Zoom 100%</div>
<div class="a" style="left:783.4px;top:391.8px;width:7.6px;height:1.1px;background:#c0c0c0"></div>
<div class="a" style="left:786.7px;top:388.5px;width:1.1px;height:7.6px;background:#c0c0c0"></div>
</div></body></html>
